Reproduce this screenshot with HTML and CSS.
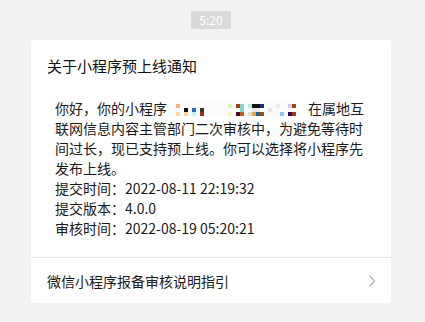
FILE: index.html
```html
<!DOCTYPE html>
<html lang="zh-CN">
<head>
    <meta charset="UTF-8">
    <meta name="viewport" content="width=device-width, initial-scale=1.0">
    <title>关于小程序预上线通知</title>
    <link rel="stylesheet" href="styles.css">
</head>
<body>
    <div class="chat">
        <div class="time-row">
            <span class="time">5:20</span>
        </div>

        <!-- Notice card -->
        <div class="card">
            <div class="card-title">关于小程序预上线通知</div>
            <div class="card-body">
                <p>你好，你的小程序<svg class="mosaic" width="122" height="14" viewBox="0 0 122 14">
                    <rect x="0" y="0" width="122" height="14" fill="#fbfbfb"/>
                    <rect x="1" y="2" width="4" height="4" fill="#f5b47c"/>
                    <rect x="1" y="10" width="4" height="4" fill="#fcd9a0"/>
                    <rect x="9" y="6" width="4" height="4" fill="#111"/>
                    <rect x="9" y="10" width="4" height="4" fill="#fcd39a"/>
                    <rect x="17" y="6" width="4" height="4" fill="#1f6fc4"/>
                    <rect x="17" y="10" width="4" height="4" fill="#c6f0f8"/>
                    <rect x="25" y="6" width="4" height="4" fill="#333"/>
                    <rect x="25" y="10" width="4" height="4" fill="#8b3a1a"/>
                    <rect x="53" y="2" width="4" height="4" fill="#d6f8ae"/>
                    <rect x="53" y="10" width="4" height="4" fill="#f6f6bc"/>
                    <rect x="61" y="2" width="4" height="4" fill="#a04010"/>
                    <rect x="61" y="10" width="4" height="4" fill="#4a0a30"/>
                    <rect x="65" y="2" width="4" height="8" fill="#7fd6cc"/>
                    <rect x="65" y="10" width="4" height="4" fill="#c06020"/>
                    <rect x="73" y="2" width="4" height="4" fill="#b0f0e0"/>
                    <rect x="73" y="10" width="4" height="4" fill="#ddd"/>
                    <rect x="77" y="2" width="8" height="4" fill="#111"/>
                    <rect x="77" y="6" width="8" height="4" fill="#e8e8e8"/>
                    <rect x="77" y="10" width="4" height="4" fill="#f0a040"/>
                    <rect x="81" y="10" width="4" height="4" fill="#1860a0"/>
                    <rect x="85" y="2" width="4" height="4" fill="#203080"/>
                    <rect x="85" y="10" width="4" height="4" fill="#9a4a20"/>
                    <rect x="93" y="6" width="4" height="4" fill="#e6e6f0"/>
                    <rect x="101" y="2" width="4" height="4" fill="#eee"/>
                    <rect x="105" y="10" width="4" height="4" fill="#88c8f0"/>
                    <rect x="113" y="2" width="4" height="4" fill="#d8c8f0"/>
                    <rect x="113" y="10" width="4" height="4" fill="#400050"/>
                    <rect x="117" y="2" width="4" height="4" fill="#a04020"/>
                    <rect x="117" y="10" width="4" height="4" fill="#9a3a20"/>
                </svg>在属地互联网信息内容主管部门二次审核中，为避免等待时间过长，现已支持预上线。你可以选择将小程序先发布上线。</p>
                <p>提交时间：2022-08-11 22:19:32</p>
                <p>提交版本：4.0.0</p>
                <p>审核时间：2022-08-19 05:20:21</p>
            </div>
            <a href="#" class="card-link">
                <span>微信小程序报备审核说明指引</span>
                <svg class="chevron" width="8" height="14" viewBox="0 0 8 14">
                    <polyline points="1.5,1.5 6.5,7 1.5,12.5" fill="none" stroke="#b5b5b5" stroke-width="1.3"/>
                </svg>
            </a>
        </div>
    </div>
</body>
</html>
```

FILE: styles.css
```css
body {
    margin: 0;
    background: #f3f3f3;
    font-family: "Noto Sans CJK SC", "Noto Sans", sans-serif;
    color: #191919;
}

.chat {
    padding-top: 11px;
}

.time-row {
    display: flex;
    justify-content: center;
    padding-right: 3px;
}

.time {
    display: inline-block;
    background: #dadada;
    color: #fff;
    font-size: 12px;
    line-height: 18px;
    height: 18px;
    width: 40px;
    text-align: center;
    border-radius: 2px;
}

.card {
    margin: 11px 0 0 31px;
    width: 360px;
    background: #fff;
    border-radius: 4px;
}

.card-title {
    padding: 15px 16px 0;
    font-size: 15px;
    line-height: 22px;
    color: #111;
}

.card-body {
    margin: 21px 0 0 24px;
    width: 316px;
    padding-bottom: 19px;
    font-size: 14px;
    line-height: 20px;
}

.card-body p {
    margin: 0;
}

.mosaic {
    display: inline-block;
    vertical-align: -2px;
    margin: 0 11px 0 8px;
}

.card-link {
    display: flex;
    align-items: center;
    justify-content: space-between;
    height: 45px;
    padding: 0 15px 0 16px;
    border-top: 1px solid #e6e6e6;
    font-size: 14px;
    color: #191919;
    text-decoration: none;
}

.chevron {
    display: block;
}
```
